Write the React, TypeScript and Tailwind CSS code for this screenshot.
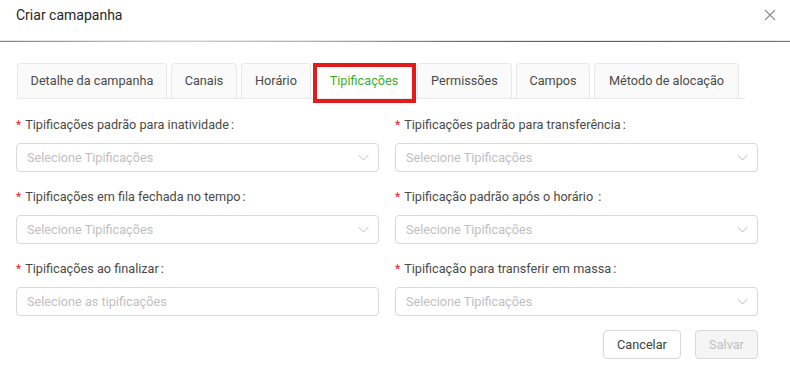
import React from 'react';

const tabs = [
  { name: 'Detalhe da campanha', w: 'w-[150px]' },
  { name: 'Canais', w: 'w-[66px]' },
  { name: 'Horário', w: 'w-[70px]' },
  { name: 'Tipificações', w: 'w-[98px]' },
  { name: 'Permissões', w: 'w-[95px]' },
  { name: 'Campos', w: 'w-[74px]' },
  { name: 'Método de alocação', w: 'w-[145px]' },
];

const Chevron = () => (
  <svg width="11" height="7" viewBox="0 0 11 7" fill="none" className="shrink-0">
    <path d="M0.5 0.8 L5.5 6 L10.5 0.8" stroke="#bfbfbf" strokeWidth="1" />
  </svg>
);

interface FieldProps {
  label: string;
  placeholder: string;
  select?: boolean;
}

const Field: React.FC<FieldProps> = ({ label, placeholder, select = true }) => (
  <div className="flex flex-col">
    <div className="h-[18px] flex items-center text-[12.7px] leading-[18px] text-[#4a4a4a] whitespace-pre">
      <span className="text-[#f5222d] mr-[4px] text-[12px]">*</span>
      <span>{label}</span>
      <span className="ml-[2px]">:</span>
    </div>
    <div className="mt-[9px] h-[29px] border border-[#d9d9d9] rounded-[4px] bg-white flex items-center justify-between pl-[10px] pr-[9px]">
      <span className="text-[12.7px] text-[#bfbfbf]">{placeholder}</span>
      {select && <Chevron />}
    </div>
  </div>
);

export default function App() {
  return (
    <div className="w-[790px] h-[367px] bg-white overflow-hidden" style={{ fontFamily: 'Roboto, "Liberation Sans", sans-serif' }}>
      <div className="h-[40px] flex items-start justify-between pl-[16px] pr-[14px] pt-[6px]">
        <span className="text-[14px] leading-[18px] text-[#262626]">Criar camapanha</span>
        <svg width="12" height="12" viewBox="0 0 12 12" className="mt-[3px]">
          <path d="M1 1 L11 11 M11 1 L1 11" stroke="#8c8c8c" strokeWidth="1.1" />
        </svg>
      </div>
      <div className="h-[1px] bg-[#e6e6e6]" />
      <div className="h-[1px] bg-[linear-gradient(to_right,#43ad47_0%,#fdd835_22%,#f29b3b_42%,#e23b36_58%,#7b3fb5_75%,#3f7fd9_100%)]" />

      <div className="mt-[21px] ml-[17px] mr-[45px] flex gap-[4px] border-b border-[#e8e8e8]">
        {tabs.map((t) => {
          const active = t.name === 'Tipificações';
          return (
            <div
              key={t.name}
              className={`relative shrink-0 whitespace-nowrap h-[35px] ${t.w} flex items-center justify-center text-[12.7px] border border-b-0 rounded-t-[4px] ${
                active ? 'bg-white text-[#3fae2a] border-white' : 'bg-[#fafafa] text-[#4a4a4a] border-[#e8e8e8]'
              }`}
            >
              {t.name}
              {active && (
                <div className="absolute left-[-3px] right-[-4px] top-[-1px] h-[40px] border-[4px] border-[#e31b1b]" />
              )}
            </div>
          );
        })}
      </div>

      <div className="mt-[17px] px-[16px] pr-[32px] grid grid-cols-2 gap-x-[16px] gap-y-[16px]">
        <Field label="Tipificações padrão para inatividade" placeholder="Selecione Tipificações" />
        <Field label="Tipificações padrão para transferência" placeholder="Selecione Tipificações" />
        <Field label="Tipificações em fila fechada no tempo" placeholder="Selecione Tipificações" />
        <Field label="Tipificação padrão após o horário " placeholder="Selecione Tipificações" />
        <Field label="Tipificações ao finalizar" placeholder="Selecione as tipificações" select={false} />
        <Field label="Tipificação para transferir em massa" placeholder="Selecione Tipificações" />
      </div>

      <div className="mt-[14px] pr-[32px] flex justify-end gap-[14px]">
        <button className="h-[29px] w-[78px] border border-[#d9d9d9] rounded-[4px] bg-white text-[12.7px] text-[#404040]">Cancelar</button>
        <button className="h-[29px] w-[63px] border border-[#d9d9d9] rounded-[4px] bg-[#f5f5f5] text-[12.7px] text-[#bfbfbf]">Salvar</button>
      </div>
    </div>
  );
}
